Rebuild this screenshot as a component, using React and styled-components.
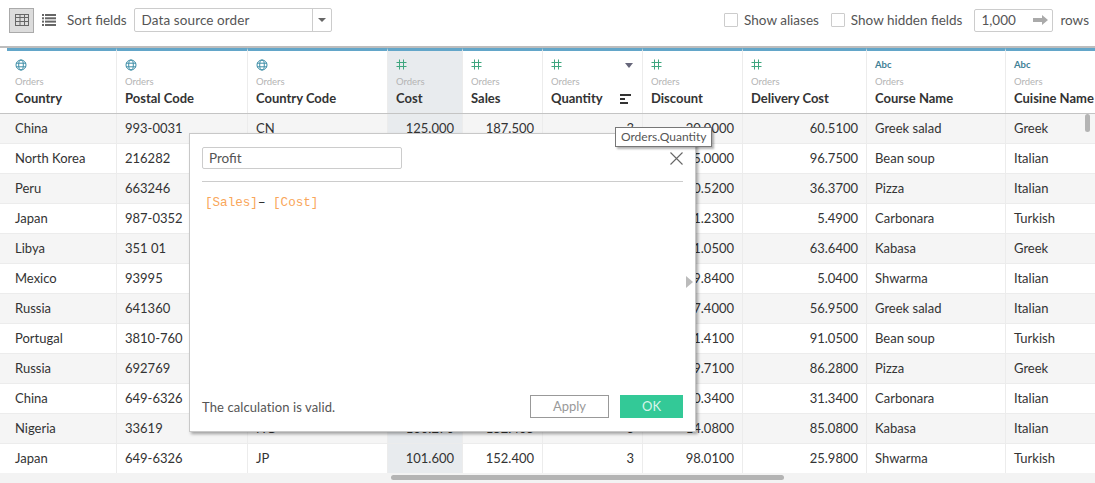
import React from 'react';
import styled, { createGlobalStyle } from 'styled-components';

const COLUMNS = [
  { name: 'Country', type: 'geo', width: 110 },
  { name: 'Postal Code', type: 'geo', width: 131 },
  { name: 'Country Code', type: 'geo', width: 140 },
  { name: 'Cost', type: 'num', width: 75, active: true },
  { name: 'Sales', type: 'num', width: 80 },
  { name: 'Quantity', type: 'num', width: 100, sorted: true },
  { name: 'Discount', type: 'num', width: 100 },
  { name: 'Delivery Cost', type: 'num', width: 124 },
  { name: 'Course Name', type: 'abc', width: 139 },
  { name: 'Cuisine Name', type: 'abc', width: 110 },
];

const ROWS = [
  ['China', '993-0031', 'CN', '125.000', '187.500', '3', '20.0000', '60.5100', 'Greek salad', 'Greek'],
  ['North Korea', '216282', 'KP', '110.000', '165.000', '3', '15.0000', '96.7500', 'Bean soup', 'Italian'],
  ['Peru', '663246', 'PE', '90.500', '135.750', '3', '10.5200', '36.3700', 'Pizza', 'Italian'],
  ['Japan', '987-0352', 'JP', '84.200', '126.300', '3', '11.2300', '5.4900', 'Carbonara', 'Turkish'],
  ['Libya', '351 01', 'LY', '72.400', '108.600', '3', '21.0500', '63.6400', 'Kabasa', 'Greek'],
  ['Mexico', '93995', 'MX', '66.100', '99.150', '3', '19.8400', '5.0400', 'Shwarma', 'Italian'],
  ['Russia', '641360', 'RU', '95.300', '142.950', '3', '17.4000', '56.9500', 'Greek salad', 'Italian'],
  ['Portugal', '3810-760', 'PT', '88.800', '133.200', '3', '31.4100', '91.0500', 'Bean soup', 'Turkish'],
  ['Russia', '692769', 'RU', '79.600', '119.400', '3', '29.7100', '86.2800', 'Pizza', 'Greek'],
  ['China', '649-6326', 'CN', '105.200', '157.800', '3', '10.3400', '31.3400', 'Carbonara', 'Italian'],
  ['Nigeria', '33619', 'NG', '100.270', '152.405', '3', '14.0800', '85.0800', 'Kabasa', 'Italian'],
  ['Japan', '649-6326', 'JP', '101.600', '152.400', '3', '98.0100', '25.9800', 'Shwarma', 'Turkish'],
];

const GlobalStyle = createGlobalStyle`
  html, body {
    margin: 0;
    padding: 0;
    background: #fff;
    overflow: hidden;
  }
  * { box-sizing: border-box; }
`;

const Page = styled.div`
  position: relative;
  width: 1095px;
  height: 483px;
  overflow: hidden;
  font-family: 'Lato', 'Liberation Sans', sans-serif;
  font-size: 13px;
  color: #333;
`;

const Toolbar = styled.div`
  display: flex;
  align-items: center;
  height: 46px;
  padding: 0 6px 6px 9px;
  color: #555;
`;

const ViewButton = styled.div`
  display: flex;
  align-items: center;
  justify-content: center;
  width: 25px;
  height: 25px;
  margin-right: ${(p) => p.$gap}px;
  background: ${(p) => (p.$on ? '#dcdcdc' : 'transparent')};
  border: 1px solid ${(p) => (p.$on ? '#aaa' : 'transparent')};
`;

const Label = styled.span`
  white-space: nowrap;
  font-size: 13.5px;
  color: #555;
`;

const SortSelect = styled.div`
  display: flex;
  align-items: stretch;
  width: 198px;
  height: 24px;
  margin-left: 7px;
  border: 1px solid #ccc;
  border-radius: 2px;
`;

const SelectValue = styled.div`
  flex: 1;
  padding-left: 7px;
  line-height: 22px;
  font-size: 13.5px;
  letter-spacing: 0.1px;
  color: #555;
  border-right: 1px solid #ccc;
`;

const SelectCaret = styled.div`
  display: flex;
  align-items: center;
  justify-content: center;
  width: 18px;
  &::after {
    content: '';
    border-left: 4px solid transparent;
    border-right: 4px solid transparent;
    border-top: 4px solid #666;
  }
`;

const Spacer = styled.div`
  flex: 1;
`;

const CheckField = styled.div`
  display: flex;
  align-items: center;
  gap: 6px;
  margin-right: 12px;
`;

const CheckBox = styled.span`
  width: 14px;
  height: 14px;
  border: 1px solid #ccc;
  border-radius: 1px;
`;

const RowsInput = styled.div`
  display: flex;
  align-items: center;
  justify-content: space-between;
  width: 79px;
  height: 23px;
  padding: 0 4px 0 6px;
  border: 1px solid #ccc;
  border-radius: 2px;
  font-size: 13.5px;
  color: #555;
`;

const RowsLabel = styled(Label)`
  margin-left: 7px;
`;

const Grid = styled.div`
  border-top: 2px solid #bdbdbd;
`;

const HeaderRow = styled.div`
  display: flex;
  height: 66px;
  padding-left: 7px;
  border-bottom: 1px solid #c4c4c4;
`;

const HeaderCell = styled.div`
  position: relative;
  flex: none;
  width: ${(p) => p.$width}px;
  padding: 7px 8px 0;
  background: ${(p) => (p.$active ? '#e8ebee' : '#fff')};
  border-top: 3px solid #63a6c9;
  border-right: 1px solid #ececec;
`;

const TypeIcon = styled.div`
  display: flex;
  align-items: center;
  height: 13px;
  font-size: 9.5px;
  font-weight: 700;
  color: #3f7f96;
`;

const Source = styled.div`
  margin-top: 5px;
  font-size: 9.5px;
  line-height: 12px;
  color: #b4b4b4;
`;

const FieldName = styled.div`
  margin-top: 2px;
  font-size: 13px;
  line-height: 16px;
  font-weight: 700;
  color: #333;
  white-space: nowrap;
`;

const HeaderMenu = styled.span`
  position: absolute;
  top: 12px;
  right: 9px;
  border-left: 4px solid transparent;
  border-right: 4px solid transparent;
  border-top: 5px solid #66667a;
`;

const SortMark = styled.svg`
  position: absolute;
  top: 43px;
  right: 11px;
`;

const DataRow = styled.div`
  display: flex;
  height: 30px;
  padding-left: 7px;
  background: ${(p) => (p.$odd ? '#f5f5f5' : '#fff')};
  border-bottom: 1px solid #ececec;
`;

const DataCell = styled.div`
  flex: none;
  width: ${(p) => p.$width}px;
  padding: 0 8px;
  line-height: 29px;
  font-size: 13px;
  color: #333;
  white-space: nowrap;
  text-align: ${(p) => (p.$num ? 'right' : 'left')};
  background: ${(p) => (p.$active ? '#e8ebee' : 'transparent')};
  border-right: 1px solid #ececec;
`;

const ScrollTrack = styled.div`
  position: absolute;
  left: 0;
  right: 0;
  bottom: 0;
  height: 10px;
  background: #f3f3f3;
`;

const ScrollThumbH = styled.div`
  position: absolute;
  left: 391px;
  top: 2px;
  width: 393px;
  height: 5px;
  border-radius: 3px;
  background: #b4b4b4;
`;

const ScrollThumbV = styled.div`
  position: absolute;
  left: 1085px;
  top: 114px;
  width: 5px;
  height: 18px;
  border-radius: 3px;
  background: #b4b4b4;
`;

const Dialog = styled.div`
  position: absolute;
  left: 189px;
  top: 133px;
  width: 507px;
  height: 299px;
  display: flex;
  flex-direction: column;
  padding: 13px 12px 13px 12px;
  background: #fff;
  border: 1px solid #c8c8c8;
  box-shadow: 2px 2px 3px rgba(0, 0, 0, 0.35);
`;

const DialogHead = styled.div`
  display: flex;
  align-items: center;
  justify-content: space-between;
  padding-bottom: 12px;
  border-bottom: 1px solid #ccc;
`;

const NameInput = styled.div`
  width: 200px;
  height: 22px;
  padding-left: 6px;
  line-height: 20px;
  font-size: 13.5px;
  color: #555;
  border: 1px solid #ccc;
  border-radius: 2px;
`;

const Formula = styled.div`
  flex: 1;
  padding: 14px 3px;
  font-family: 'Liberation Mono', monospace;
  font-size: 12.6px;
  line-height: 14px;
  color: #222;
`;

const FieldRef = styled.span`
  color: #f9a65a;
`;

const DialogFoot = styled.div`
  display: flex;
  align-items: center;
  justify-content: flex-end;
  gap: 11px;
  height: 23px;
`;

const Status = styled.span`
  margin-right: auto;
  font-size: 13px;
  letter-spacing: 0.1px;
  color: #555;
`;

const ApplyButton = styled.div`
  width: 79px;
  height: 23px;
  line-height: 21px;
  text-align: center;
  font-size: 13px;
  color: #999;
  border: 1px solid #999;
`;

const OkButton = styled.div`
  width: 63px;
  height: 23px;
  line-height: 23px;
  text-align: center;
  font-size: 13px;
  color: #d8f5ea;
  background: #33c997;
`;

const ExpandArrow = styled.span`
  position: absolute;
  right: 2px;
  top: 142px;
  border-top: 6px solid transparent;
  border-bottom: 6px solid transparent;
  border-left: 7px solid #bbb;
`;

const Tooltip = styled.div`
  position: absolute;
  left: 615px;
  top: 127px;
  height: 20px;
  padding: 0 5px;
  line-height: 18px;
  font-size: 12px;
  color: #555;
  background: #fff;
  border: 1px solid #777;
  box-shadow: 2px 2px 2px rgba(0, 0, 0, 0.3);
`;

const GlobeIcon = () => (
  <svg width="12" height="12" viewBox="0 0 12 12" fill="none" stroke="#3f8fa8" strokeWidth="1">
    <circle cx="6" cy="6" r="5" />
    <ellipse cx="6" cy="6" rx="2.3" ry="5" />
    <path d="M1 4.2h10M1 7.8h10" />
  </svg>
);

const HashIcon = () => (
  <svg width="11" height="11" viewBox="0 0 11 11" fill="none" stroke="#3fa67f" strokeWidth="1">
    <path d="M3.5 0.5v10M7.5 0.5v10M0.5 3.5h10M0.5 7.5h10" />
  </svg>
);

const TableViewIcon = () => (
  <svg width="14" height="12" viewBox="0 0 14 12" fill="none" stroke="#666" strokeWidth="1">
    <rect x="0.5" y="0.5" width="13" height="11" />
    <path d="M0.5 3.5h13M0.5 7.5h13M5 0.5v11M9.5 0.5v11" />
  </svg>
);

const ListViewIcon = () => (
  <svg width="14" height="12" viewBox="0 0 14 12" fill="#666">
    <rect x="0" y="0" width="2" height="2" />
    <rect x="3" y="0" width="11" height="2" />
    <rect x="0" y="3.3" width="2" height="2" />
    <rect x="3" y="3.3" width="11" height="2" />
    <rect x="0" y="6.6" width="2" height="2" />
    <rect x="3" y="6.6" width="11" height="2" />
    <rect x="0" y="10" width="2" height="2" />
    <rect x="3" y="10" width="11" height="2" />
  </svg>
);

const ArrowIcon = () => (
  <svg width="15" height="10" viewBox="0 0 15 10" fill="#aaa">
    <path d="M0 3h9V0l6 5-6 5V7H0z" />
  </svg>
);

const CloseIcon = () => (
  <svg width="13" height="13" viewBox="0 0 13 13" fill="none" stroke="#666" strokeWidth="1.1">
    <path d="M0.5 0.5l12 12M12.5 0.5l-12 12" />
  </svg>
);

const typeIcons = {
  geo: <GlobeIcon />,
  num: <HashIcon />,
  abc: 'Abc',
};

const App = () => (
  <Page>
    <GlobalStyle />
    <Toolbar>
      <ViewButton $on $gap={2}>
        <TableViewIcon />
      </ViewButton>
      <ViewButton $gap={6}>
        <ListViewIcon />
      </ViewButton>
      <Label>Sort fields</Label>
      <SortSelect>
        <SelectValue>Data source order</SelectValue>
        <SelectCaret />
      </SortSelect>
      <Spacer />
      <CheckField>
        <CheckBox />
        <Label>Show aliases</Label>
      </CheckField>
      <CheckField>
        <CheckBox />
        <Label>Show hidden fields</Label>
      </CheckField>
      <RowsInput>
        1,000
        <ArrowIcon />
      </RowsInput>
      <RowsLabel>rows</RowsLabel>
    </Toolbar>
    <Grid>
      <HeaderRow>
        {COLUMNS.map((col) => (
          <HeaderCell key={col.name} $width={col.width} $active={col.active}>
            <TypeIcon>{typeIcons[col.type]}</TypeIcon>
            <Source>Orders</Source>
            <FieldName>{col.name}</FieldName>
            {col.sorted && (
              <>
                <HeaderMenu />
                <SortMark width="11" height="10" viewBox="0 0 11 10" fill="#333">
                  <rect x="0" y="0" width="11" height="2" />
                  <rect x="0" y="4" width="5" height="2" />
                  <rect x="0" y="8" width="8" height="2" />
                </SortMark>
              </>
            )}
          </HeaderCell>
        ))}
      </HeaderRow>
      {ROWS.map((row, i) => (
        <DataRow key={i} $odd={i % 2 === 0}>
          {row.map((value, j) => (
            <DataCell
              key={COLUMNS[j].name}
              $width={COLUMNS[j].width}
              $num={COLUMNS[j].type === 'num'}
              $active={COLUMNS[j].active}
            >
              {value}
            </DataCell>
          ))}
        </DataRow>
      ))}
    </Grid>
    <ScrollThumbV />
    <ScrollTrack>
      <ScrollThumbH />
    </ScrollTrack>
    <Dialog>
      <DialogHead>
        <NameInput>Profit</NameInput>
        <CloseIcon />
      </DialogHead>
      <Formula>
        <FieldRef>[Sales]</FieldRef>– <FieldRef>[Cost]</FieldRef>
      </Formula>
      <DialogFoot>
        <Status>The calculation is valid.</Status>
        <ApplyButton>Apply</ApplyButton>
        <OkButton>OK</OkButton>
      </DialogFoot>
      <ExpandArrow />
    </Dialog>
    <Tooltip>Orders.Quantity</Tooltip>
  </Page>
);

export default App;
